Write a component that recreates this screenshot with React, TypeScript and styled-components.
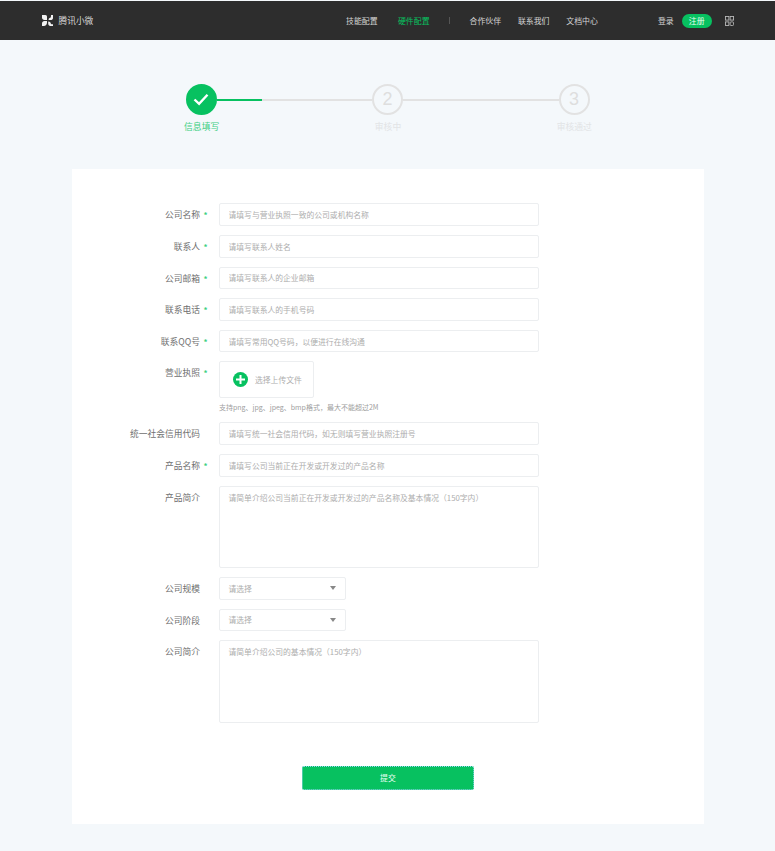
import styled, { createGlobalStyle } from 'styled-components';

const GREEN = '#07c160';
const FONT = '"Noto Sans CJK SC", "Noto Sans", sans-serif';

const GlobalStyle = createGlobalStyle`
  html, body {
    margin: 0;
    padding: 0;
    background: #f4f8fb;
    font-family: ${FONT};
  }
  * {
    box-sizing: border-box;
  }
`;

/// HEADER
const Page = styled.div`
  width: 775px;
  height: 851px;
  padding-top: 1px;
  overflow: hidden;
`;

const Header = styled.header`
  height: 39px;
  background: #2d2d2d;
  display: flex;
  align-items: center;
  padding-left: 42px;
  font-size: 7.9px;
  color: #d4d4d4;
`;

const Logo = styled.div`
  display: flex;
  align-items: center;
  gap: 5.5px;
  width: 304px;
  font-size: 8.7px;
  color: #d8d8d8;
`;

const NavLink = styled.span<{ $active?: boolean; $gap: number }>`
  margin-right: ${(props) => props.$gap}px;
  color: ${(props) => (props.$active ? GREEN : '#d4d4d4')};
  white-space: nowrap;
`;

const NavDivider = styled.i`
  width: 1px;
  height: 7px;
  background: #555;
  margin-right: 20px;
`;

const RegisterPill = styled.span`
  width: 30px;
  height: 14px;
  margin: 0 13px 0 8px;
  border-radius: 7px;
  background: ${GREEN};
  color: #e8fff2;
  display: flex;
  align-items: center;
  justify-content: center;
`;

/// STEPPER
const Stepper = styled.section`
  height: 129px;
  padding-top: 44px;
`;

const StepTrack = styled.div`
  width: 404px;
  margin: 0 auto;
  display: flex;
  align-items: center;
`;

const StepCircle = styled.div<{ $done?: boolean }>`
  flex: none;
  width: 31px;
  height: 31px;
  border-radius: 50%;
  border: 2px solid ${(props) => (props.$done ? GREEN : '#e2e2e2')};
  background: ${(props) => (props.$done ? GREEN : 'transparent')};
  color: #dedede;
  font-family: 'Liberation Sans', sans-serif;
  font-size: 18px;
  display: flex;
  align-items: center;
  justify-content: center;
`;

const Connector = styled.div`
  flex: 1;
  height: 2px;
  margin-top: 1px;
  background: #e2e2e2;
`;

const ConnectorFill = styled.div`
  width: 45px;
  height: 100%;
  background: ${GREEN};
`;

const StepLabels = styled.div`
  width: 560px;
  margin: 5px auto 0;
  padding-left: 1px;
  display: grid;
  grid-template-columns: repeat(3, 1fr);
  font-size: 8.8px;
  line-height: 13px;
  text-align: center;
`;

const StepLabel = styled.span<{ $done?: boolean }>`
  color: ${(props) => (props.$done ? '#3ecf82' : '#e2e4e6')};
`;

/// FORM
const Card = styled.main`
  width: 632px;
  height: 655px;
  margin-left: 72px;
  padding-top: 34.4px;
  background: #fff;
`;

const Form = styled.form`
  display: flex;
  flex-direction: column;
  gap: 9px;
`;

const Field = styled.div`
  display: grid;
  grid-template-columns: 128px 19px auto;
  justify-content: start;
  align-items: start;
`;

const Label = styled.label`
  height: 22.6px;
  font-size: 8.75px;
  line-height: 24.6px;
  color: #707070;
  text-align: right;
  white-space: nowrap;
`;

const Star = styled.span`
  height: 22.6px;
  padding-left: 3.5px;
  font-size: 8px;
  font-weight: 700;
  line-height: 24.6px;
  color: #3ecf82;
`;

const controlStyle = `
  border: 1px solid #eceef0;
  border-radius: 2px;
  background: #fff;
  padding: 0 8.5px;
  font-family: ${FONT};
  font-size: 7.8px;
  color: #adadad;
  outline: none;
`;

const TextInput = styled.input`
  ${controlStyle}
  display: block;
  width: 320px;
  height: 22.6px;
  &::placeholder {
    color: #adadad;
    opacity: 1;
  }
`;

const TextArea = styled.textarea`
  ${controlStyle}
  display: block;
  width: 320px;
  height: 82.5px;
  padding-top: 5px;
  line-height: 12px;
  resize: none;
  &::placeholder {
    color: #adadad;
    opacity: 1;
  }
`;

const Select = styled.div`
  ${controlStyle}
  width: 127px;
  height: 22.6px;
  display: flex;
  align-items: center;
  justify-content: space-between;
  padding-right: 9px;
`;

const Caret = styled.i`
  width: 0;
  height: 0;
  border-left: 3.5px solid transparent;
  border-right: 3.5px solid transparent;
  border-top: 4px solid #888;
`;

const UploadBox = styled.div`
  ${controlStyle}
  width: 95px;
  height: 37px;
  padding: 0 0 0 13px;
  display: flex;
  align-items: center;
  gap: 7px;
`;

const Hint = styled.p`
  margin: 4px 0 0;
  font-size: 7px;
  line-height: 11px;
  color: #a0a0a0;
  white-space: nowrap;
`;

const Actions = styled.div`
  display: flex;
  justify-content: center;
  padding: 34px 0 0 0;
`;

const Submit = styled.button`
  width: 172px;
  height: 24px;
  border: 1px dotted #8fd6ee;
  border-radius: 2px;
  background: ${GREEN};
  color: #e8fff2;
  font-family: ${FONT};
  font-size: 7.9px;
`;

/// ICONS
const LogoIcon = () => (
  <svg width="11" height="11" viewBox="0 0 11 11" fill="#f2f2f2">
    <path d="M0 0h3.4C4.4 0 5 .8 5 1.8V5H2.4C1 5 0 4 0 2.6z" />
    <path d="M11 0v3C11 4.4 9.8 5 8.6 5H6.6c0-1.4.6-2 1.6-2.2C9 2.6 9 1.6 9 0z" />
    <path d="M0 11V8.4C0 7 1 6 2.4 6H5v1.6C5 9.6 3.6 11 1.8 11z" />
    <path d="M11 11H8.4C7 11 6.2 10 6.2 8.6V6.4c1.6 0 2.4.8 2.6 2 .1.6 1.2.8 2.2.8z" />
  </svg>
);

const GridIcon = () => (
  <svg width="9" height="10" viewBox="0 0 10 11" fill="none" stroke="#b8b8b8" strokeWidth="1">
    <rect x="0.5" y="0.5" width="3.8" height="4" />
    <rect x="5.7" y="0.5" width="3.8" height="4" />
    <rect x="0.5" y="6.5" width="3.8" height="4" />
    <rect x="5.7" y="6.5" width="3.8" height="4" rx="1" />
  </svg>
);

const CheckIcon = () => (
  <svg width="16" height="13" viewBox="0 0 16 13" fill="none" stroke="#fff" strokeWidth="2.4">
    <path d="M1.5 6.5l4.6 4.4L14.5 1.8" />
  </svg>
);

const PlusIcon = () => (
  <svg width="15" height="15" viewBox="0 0 15 15">
    <circle cx="7.5" cy="7.5" r="7.5" fill={GREEN} />
    <path d="M7.5 3v9M3 7.5h9" stroke="#fff" strokeWidth="2" />
  </svg>
);

const NAV_LEFT = [
  { text: '技能配置', gap: 20.4 },
  { text: '硬件配置', gap: 19, active: true },
];

const NAV_RIGHT = [
  { text: '合作伙伴', gap: 16.8 },
  { text: '联系我们', gap: 16.8 },
  { text: '文档中心', gap: 60 },
];

export default function App() {
  return (
    <Page>
      <GlobalStyle />
      <Header>
        <Logo>
          <LogoIcon />
          <span>腾讯小微</span>
        </Logo>
        {NAV_LEFT.map(({ text, gap, active }) => (
          <NavLink key={text} $gap={gap} $active={active}>
            {text}
          </NavLink>
        ))}
        <NavDivider />
        {NAV_RIGHT.map(({ text, gap }) => (
          <NavLink key={text} $gap={gap}>
            {text}
          </NavLink>
        ))}
        <span>登录</span>
        <RegisterPill>注册</RegisterPill>
        <GridIcon />
      </Header>

      <Stepper>
        <StepTrack>
          <StepCircle $done>
            <CheckIcon />
          </StepCircle>
          <Connector>
            <ConnectorFill />
          </Connector>
          <StepCircle>2</StepCircle>
          <Connector />
          <StepCircle>3</StepCircle>
        </StepTrack>
        <StepLabels>
          <StepLabel $done>信息填写</StepLabel>
          <StepLabel>审核中</StepLabel>
          <StepLabel>审核通过</StepLabel>
        </StepLabels>
      </Stepper>

      <Card>
        <Form>
          <Field>
            <Label>公司名称</Label>
            <Star>*</Star>
            <TextInput placeholder="请填写与营业执照一致的公司或机构名称" />
          </Field>
          <Field>
            <Label>联系人</Label>
            <Star>*</Star>
            <TextInput placeholder="请填写联系人姓名" />
          </Field>
          <Field>
            <Label>公司邮箱</Label>
            <Star>*</Star>
            <TextInput placeholder="请填写联系人的企业邮箱" />
          </Field>
          <Field>
            <Label>联系电话</Label>
            <Star>*</Star>
            <TextInput placeholder="请填写联系人的手机号码" />
          </Field>
          <Field>
            <Label>联系QQ号</Label>
            <Star>*</Star>
            <TextInput placeholder="请填写常用QQ号码，以便进行在线沟通" />
          </Field>
          <Field>
            <Label>营业执照</Label>
            <Star>*</Star>
            <div>
              <UploadBox>
                <PlusIcon />
                <span>选择上传文件</span>
              </UploadBox>
              <Hint>支持png、jpg、jpeg、bmp格式，最大不能超过2M</Hint>
            </div>
          </Field>
          <Field>
            <Label>统一社会信用代码</Label>
            <span />
            <TextInput placeholder="请填写统一社会信用代码，如无则填写营业执照注册号" />
          </Field>
          <Field>
            <Label>产品名称</Label>
            <Star>*</Star>
            <TextInput placeholder="请填写公司当前正在开发或开发过的产品名称" />
          </Field>
          <Field>
            <Label>产品简介</Label>
            <span />
            <TextArea placeholder="请简单介绍公司当前正在开发或开发过的产品名称及基本情况（150字内）" />
          </Field>
          <Field>
            <Label>公司规模</Label>
            <span />
            <Select>
              请选择
              <Caret />
            </Select>
          </Field>
          <Field>
            <Label>公司阶段</Label>
            <span />
            <Select>
              请选择
              <Caret />
            </Select>
          </Field>
          <Field>
            <Label>公司简介</Label>
            <span />
            <TextArea placeholder="请简单介绍公司的基本情况（150字内）" />
          </Field>
          <Actions>
            <Submit type="button">提交</Submit>
          </Actions>
        </Form>
      </Card>
    </Page>
  );
}
